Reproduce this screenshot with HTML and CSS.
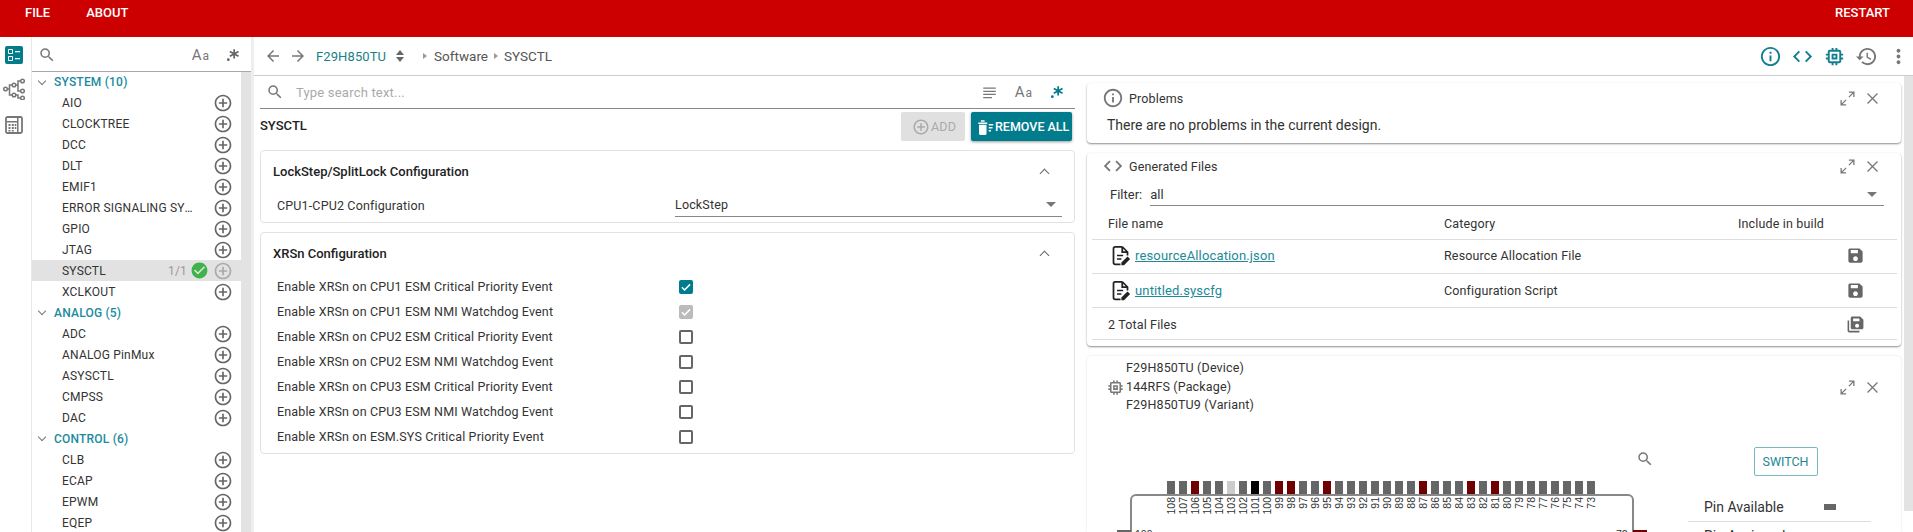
FILE: index.html
```html
<!DOCTYPE html>
<html lang="en">
<head>
  <meta charset="UTF-8">
  <title>SysConfig</title>
  <link rel="stylesheet" href="styles.css">
</head>
<body>
  <svg class="defs" width="0" height="0">
    <symbol id="i-search" viewBox="0 0 24 24"><path d="M15.5 14h-.79l-.28-.27A6.47 6.47 0 0 0 16 9.5 6.5 6.5 0 1 0 9.5 16c1.61 0 3.09-.59 4.23-1.57l.27.28v.79l5 4.99L20.49 19l-4.99-5zm-6 0C7.01 14 5 11.99 5 9.5S7.01 5 9.5 5 14 7.01 14 9.5 11.99 14 9.5 14z"/></symbol>
    <symbol id="i-add" viewBox="0 0 24 24"><path d="M13 7h-2v4H7v2h4v4h2v-4h4v-2h-4V7zm-1-5C6.48 2 2 6.48 2 12s4.48 10 10 10 10-4.48 10-10S17.52 2 12 2zm0 18c-4.41 0-8-3.59-8-8s3.59-8 8-8 8 3.59 8 8-3.59 8-8 8z"/></symbol>
    <symbol id="i-ok" viewBox="0 0 24 24"><path d="M12 2C6.48 2 2 6.48 2 12s4.48 10 10 10 10-4.48 10-10S17.52 2 12 2zm-2 15l-5-5 1.41-1.41L10 14.17l7.59-7.59L19 8l-9 9z"/></symbol>
    <symbol id="i-info" viewBox="0 0 24 24"><path d="M11 7h2v2h-2zm0 4h2v6h-2zm1-9C6.48 2 2 6.48 2 12s4.48 10 10 10 10-4.48 10-10S17.52 2 12 2zm0 18c-4.41 0-8-3.59-8-8s3.59-8 8-8 8 3.59 8 8-3.59 8-8 8z"/></symbol>
    <symbol id="i-code" viewBox="0 0 24 24"><path d="M9.4 16.6L4.8 12l4.6-4.6L8 6l-6 6 6 6 1.4-1.4zm5.2 0l4.6-4.6-4.6-4.6L16 6l6 6-6 6-1.4-1.4z"/></symbol>
    <symbol id="i-chip" viewBox="0 0 24 24"><path d="M15 9H9v6h6V9zm-2 4h-2v-2h2v2zm8-2V9h-2V7c0-1.1-.9-2-2-2h-2V3h-2v2h-2V3H9v2H7c-1.1 0-2 .9-2 2v2H3v2h2v2H3v2h2v2c0 1.1.9 2 2 2h2v2h2v-2h2v2h2v-2h2c1.1 0 2-.9 2-2v-2h2v-2h-2v-2h2zm-4 6H7V7h10v10z"/></symbol>
    <symbol id="i-history" viewBox="0 0 24 24"><path d="M13 3c-4.97 0-9 4.03-9 9H1l3.89 3.89.07.14L9 12H6c0-3.87 3.13-7 7-7s7 3.13 7 7-3.13 7-7 7c-1.93 0-3.68-.79-4.94-2.06l-1.42 1.42C8.27 19.99 10.51 21 13 21c4.97 0 9-4.03 9-9s-4.03-9-9-9zm-1 5v5l4.28 2.54.72-1.21-3.5-2.08V8H12z"/></symbol>
    <symbol id="i-more" viewBox="0 0 24 24"><path d="M12 8c1.1 0 2-.9 2-2s-.9-2-2-2-2 .9-2 2 .9 2 2 2zm0 2c-1.1 0-2 .9-2 2s.9 2 2 2 2-.9 2-2-.9-2-2-2zm0 6c-1.1 0-2 .9-2 2s.9 2 2 2 2-.9 2-2-.9-2-2-2z"/></symbol>
    <symbol id="i-back" viewBox="0 0 24 24"><path d="M20 11H7.83l5.59-5.59L12 4l-8 8 8 8 1.41-1.41L7.83 13H20v-2z"/></symbol>
    <symbol id="i-forward" viewBox="0 0 24 24"><path d="M12 4l-1.41 1.41L16.17 11H4v2h12.17l-5.58 5.59L12 20l8-8z"/></symbol>
    <symbol id="i-close" viewBox="0 0 24 24"><path d="M5 5l14 14M19 5L5 19" fill="none" stroke="currentColor" stroke-width="1.8"/></symbol>
    <symbol id="i-expand" viewBox="0 0 24 24"><path d="M14 3h7v7M21 3l-7 7M3 14v7h7M3 21l7-7" fill="none" stroke="currentColor" stroke-width="1.8"/></symbol>
    <symbol id="i-save" viewBox="0 0 24 24"><path d="M17 3H5c-1.11 0-2 .9-2 2v14c0 1.1.89 2 2 2h14c1.1 0 2-.9 2-2V7l-4-4zm-5 16c-1.66 0-3-1.34-3-3s1.34-3 3-3 3 1.34 3 3-1.34 3-3 3zm3-10H6V5h9v4z"/></symbol>
    <symbol id="i-saveall" viewBox="0 0 24 24"><path d="M2 7h2v13h13v2H4c-1.1 0-2-.9-2-2V7z"/><path d="M18 2H8c-1.1 0-2 .9-2 2v12c0 1.1.9 2 2 2h12c1.1 0 2-.9 2-2V6l-4-4zm-4 14c-1.4 0-2.5-1.1-2.5-2.5S12.600 11 14 11s2.500 1.100 2.500 2.500S15.400 16 14 16zm3-8H9V4.500h8V8z"/></symbol>
    <symbol id="i-file" viewBox="0 0 24 24"><path d="M14 2H6a2 2 0 0 0-2 2v16a2 2 0 0 0 2 2h6M14 2l6 6v4M14 2v6h6" fill="none" stroke="currentColor" stroke-width="2"/><path d="M8 12h7M8 16h5" stroke="currentColor" stroke-width="1.800"/><path d="M13 23v-3l7-7 3 3-7 7z"/></symbol>
    <symbol id="i-regex" viewBox="0 0 24 24"><circle cx="4" cy="20" r="2.400"/><path d="M14 2v16M6.500 6l15 8M21.500 6l-15 8" fill="none" stroke="currentColor" stroke-width="3"/></symbol>
    <symbol id="i-wrap" viewBox="0 0 24 24"><path d="M2 4h20v2H2zM2 9h20v2H2zM2 14h20v2H2zM2 19h14v2H2z"/></symbol>
    <symbol id="i-tick" viewBox="0 0 24 24"><path d="M5 12.500l4.500 4.500L19 7.500" fill="none" stroke="#fff" stroke-width="2.600"/></symbol>
    <symbol id="i-trash" viewBox="0 0 24 24"><path d="M3 6h12v2H3zM6.500 3h5v2h-5zM4 9h10v12a1.500 1.500 0 0 1-1.500 1.500h-7A1.500 1.500 0 0 1 4 21zM17 8h6v2h-6zM17 12h5v2h-5zM17 16h3v2h-3z"/></symbol>
    <symbol id="i-list" viewBox="0 0 18 18"><rect width="18" height="18" rx="2" fill="#007c8c"/><path d="M3.500 3.500h4v4h-4zM3.500 10.500h4v4h-4z" fill="none" stroke="#fff"/><path d="M10 5h5v1.200h-5zM10 12h5v1.200h-5z" fill="#fff"/></symbol>
    <symbol id="i-tree" viewBox="0 0 22 22"><g fill="none" stroke="currentColor" stroke-width="1.500"><circle cx="2.500" cy="11" r="1.800"/><circle cx="11" cy="7" r="1.800"/><circle cx="11" cy="17" r="1.800"/><circle cx="19.500" cy="3" r="1.800"/><circle cx="19.500" cy="13" r="1.800"/><circle cx="19.500" cy="20" r="1.800"/><path d="M4.300 11h2.200V7h2.700M6.500 11v6h2.700M12.800 7h2.200V3h2.700M15 7v6h2.700M12.800 17h2.200v3h2.700"/></g></symbol>
    <symbol id="i-calc" viewBox="0 0 18 18"><rect x="1" y="1" width="16" height="16" rx="1.500" fill="none" stroke="currentColor" stroke-width="1.800"/><path d="M2 5h10v1.500H2zM12 1h1.500v16H12z"/><path d="M3.500 8h2v2h-2zM6.800 8h2v2h-2zM3.500 11h2v2h-2zM6.800 11h2v2h-2zM3.500 14h2v1.500h-2zM6.800 14h2v1.500h-2zM9.800 8h1.500v2H9.800zM9.800 11h1.500v2H9.800z"/></symbol>
  </svg>

  <header class="topbar">
    <nav class="topbar-menu"><span>FILE</span><span>ABOUT</span></nav>
    <span>RESTART</span>
  </header>

  <div class="app">
    <aside class="rail">
      <svg class="rail-list"><use href="#i-list"/></svg>
      <svg class="rail-tree"><use href="#i-tree"/></svg>
      <svg class="rail-calc"><use href="#i-calc"/></svg>
    </aside>

    <aside class="sidebar">
      <div class="side-search">
        <svg class="ico-search"><use href="#i-search"/></svg>
        <span class="aa">A<small>a</small></span>
        <svg class="ico-regex"><use href="#i-regex"/></svg>
      </div>
      <div class="side-body">
        <div class="mods">
          <div class="group group-first"><span class="chev"></span>SYSTEM (10)</div>
          <div class="mod"><span class="mod-name">AIO</span><svg class="plus"><use href="#i-add"/></svg></div>
          <div class="mod"><span class="mod-name">CLOCKTREE</span><svg class="plus"><use href="#i-add"/></svg></div>
          <div class="mod"><span class="mod-name">DCC</span><svg class="plus"><use href="#i-add"/></svg></div>
          <div class="mod"><span class="mod-name">DLT</span><svg class="plus"><use href="#i-add"/></svg></div>
          <div class="mod"><span class="mod-name">EMIF1</span><svg class="plus"><use href="#i-add"/></svg></div>
          <div class="mod"><span class="mod-name trunc">ERROR SIGNALING SYSTEM</span><svg class="plus"><use href="#i-add"/></svg></div>
          <div class="mod"><span class="mod-name">GPIO</span><svg class="plus"><use href="#i-add"/></svg></div>
          <div class="mod"><span class="mod-name">JTAG</span><svg class="plus"><use href="#i-add"/></svg></div>
          <div class="mod selected"><span class="mod-name">SYSCTL</span><span class="count">1/1</span><svg class="ok"><use href="#i-ok"/></svg><svg class="plus"><use href="#i-add"/></svg></div>
          <div class="mod"><span class="mod-name">XCLKOUT</span><svg class="plus"><use href="#i-add"/></svg></div>
          <div class="group"><span class="chev"></span>ANALOG (5)</div>
          <div class="mod"><span class="mod-name">ADC</span><svg class="plus"><use href="#i-add"/></svg></div>
          <div class="mod"><span class="mod-name">ANALOG PinMux</span><svg class="plus"><use href="#i-add"/></svg></div>
          <div class="mod"><span class="mod-name">ASYSCTL</span><svg class="plus"><use href="#i-add"/></svg></div>
          <div class="mod"><span class="mod-name">CMPSS</span><svg class="plus"><use href="#i-add"/></svg></div>
          <div class="mod"><span class="mod-name">DAC</span><svg class="plus"><use href="#i-add"/></svg></div>
          <div class="group"><span class="chev"></span>CONTROL (6)</div>
          <div class="mod"><span class="mod-name">CLB</span><svg class="plus"><use href="#i-add"/></svg></div>
          <div class="mod"><span class="mod-name">ECAP</span><svg class="plus"><use href="#i-add"/></svg></div>
          <div class="mod"><span class="mod-name">EPWM</span><svg class="plus"><use href="#i-add"/></svg></div>
          <div class="mod"><span class="mod-name">EQEP</span><svg class="plus"><use href="#i-add"/></svg></div>
        </div>
        <div class="track"></div>
      </div>
    </aside>

    <main class="main">
      <div class="crumbs">
        <svg class="nav-arrow"><use href="#i-back"/></svg>
        <svg class="nav-arrow"><use href="#i-forward"/></svg>
        <span class="device">F29H850TU</span>
        <span class="sorter"><i></i><i></i></span>
        <span class="tri first"></span><span>Software</span>
        <span class="tri"></span><span>SYSCTL</span>
        <div class="crumb-tools">
          <svg class="tool teal"><use href="#i-info"/></svg>
          <svg class="tool teal"><use href="#i-code"/></svg>
          <svg class="tool teal"><use href="#i-chip"/></svg>
          <svg class="tool"><use href="#i-history"/></svg>
          <svg class="tool more"><use href="#i-more"/></svg>
        </div>
      </div>

      <div class="panes">
        <section class="config">
          <div class="conf-search">
            <svg class="ico-search"><use href="#i-search"/></svg>
            <span class="placeholder">Type search text...</span>
            <svg class="ico-wrap"><use href="#i-wrap"/></svg>
            <span class="aa">A<small>a</small></span>
            <svg class="ico-regex on"><use href="#i-regex"/></svg>
          </div>
          <div class="conf-title">
            <strong>SYSCTL</strong>
            <div class="conf-btns">
              <button class="btn-add"><svg><use href="#i-add"/></svg>ADD</button>
              <button class="btn-remove"><svg><use href="#i-trash"/></svg>REMOVE ALL</button>
            </div>
          </div>

          <div class="group-card">
            <div class="group-head"><span>LockStep/SplitLock Configuration</span><span class="chev-up"></span></div>
            <div class="row row-select">
              <span class="row-label">CPU1-CPU2 Configuration</span>
              <div class="select select-wide"><span>LockStep</span><i class="caret"></i></div>
            </div>
          </div>

          <div class="group-card">
            <div class="group-head"><span>XRSn Configuration</span><span class="chev-up"></span></div>
            <div class="row"><span class="row-label">Enable XRSn on CPU1 ESM Critical Priority Event</span><span class="check on"><svg><use href="#i-tick"/></svg></span></div>
            <div class="row"><span class="row-label">Enable XRSn on CPU1 ESM NMI Watchdog Event</span><span class="check off"><svg><use href="#i-tick"/></svg></span></div>
            <div class="row"><span class="row-label">Enable XRSn on CPU2 ESM Critical Priority Event</span><span class="check"></span></div>
            <div class="row"><span class="row-label">Enable XRSn on CPU2 ESM NMI Watchdog Event</span><span class="check"></span></div>
            <div class="row"><span class="row-label">Enable XRSn on CPU3 ESM Critical Priority Event</span><span class="check"></span></div>
            <div class="row"><span class="row-label">Enable XRSn on CPU3 ESM NMI Watchdog Event</span><span class="check"></span></div>
            <div class="row"><span class="row-label">Enable XRSn on ESM.SYS Critical Priority Event</span><span class="check"></span></div>
          </div>
        </section>

        <section class="side-panels">
          <div class="cards">
            <div class="card card-problems">
              <div class="card-head">
                <svg class="head-ico"><use href="#i-info"/></svg><span class="card-title">Problems</span>
                <svg class="win"><use href="#i-expand"/></svg><svg class="win"><use href="#i-close"/></svg>
              </div>
              <p class="problems-msg">There are no problems in the current design.</p>
            </div>

            <div class="card card-files">
              <div class="card-head">
                <svg class="head-ico"><use href="#i-code"/></svg><span class="card-title">Generated Files</span>
                <svg class="win"><use href="#i-expand"/></svg><svg class="win"><use href="#i-close"/></svg>
              </div>
              <div class="filter">
                <span>Filter:</span>
                <div class="select"><span>all</span><i class="caret"></i></div>
              </div>
              <div class="ftable">
                <div class="frow fhead"><span>File name</span><span>Category</span><span>Include in build</span></div>
                <div class="frow frow-first">
                  <span class="fname"><svg><use href="#i-file"/></svg><a>resourceAllocation.json</a></span>
                  <span>Resource Allocation File</span>
                  <svg class="fsave"><use href="#i-save"/></svg>
                </div>
                <div class="frow">
                  <span class="fname"><svg><use href="#i-file"/></svg><a>untitled.syscfg</a></span>
                  <span>Configuration Script</span>
                  <svg class="fsave"><use href="#i-save"/></svg>
                </div>
                <div class="frow ftotal">
                  <span>2 Total Files</span><span></span>
                  <svg class="fsave"><use href="#i-saveall"/></svg>
                </div>
              </div>
            </div>

            <div class="card card-device">
              <div class="device-head">
                <svg class="device-ico"><use href="#i-chip"/></svg>
                <div class="device-lines">
                  <div>F29H850TU (Device)</div>
                  <div>144RFS (Package)</div>
                  <div>F29H850TU9 (Variant)</div>
                </div>
                <svg class="win"><use href="#i-expand"/></svg><svg class="win"><use href="#i-close"/></svg>
              </div>
              <div class="device-body">
                <div class="diagram">
                  <svg class="zoom-ico"><use href="#i-search"/></svg>
                  <div class="pins">
                    <div class="pin"><b></b><span>108</span></div>
                    <div class="pin"><b></b><span>107</span></div>
                    <div class="pin used"><b></b><span>106</span></div>
                    <div class="pin"><b></b><span>105</span></div>
                    <div class="pin"><b></b><span>104</span></div>
                    <div class="pin na"><b></b><span>103</span></div>
                    <div class="pin"><b></b><span>102</span></div>
                    <div class="pin blk"><b></b><span>101</span></div>
                    <div class="pin"><b></b><span>100</span></div>
                    <div class="pin used"><b></b><span>99</span></div>
                    <div class="pin used"><b></b><span>98</span></div>
                    <div class="pin"><b></b><span>97</span></div>
                    <div class="pin"><b></b><span>96</span></div>
                    <div class="pin used"><b></b><span>95</span></div>
                    <div class="pin"><b></b><span>94</span></div>
                    <div class="pin"><b></b><span>93</span></div>
                    <div class="pin"><b></b><span>92</span></div>
                    <div class="pin"><b></b><span>91</span></div>
                    <div class="pin"><b></b><span>90</span></div>
                    <div class="pin"><b></b><span>89</span></div>
                    <div class="pin"><b></b><span>88</span></div>
                    <div class="pin used"><b></b><span>87</span></div>
                    <div class="pin"><b></b><span>86</span></div>
                    <div class="pin"><b></b><span>85</span></div>
                    <div class="pin"><b></b><span>84</span></div>
                    <div class="pin used"><b></b><span>83</span></div>
                    <div class="pin"><b></b><span>82</span></div>
                    <div class="pin used"><b></b><span>81</span></div>
                    <div class="pin"><b></b><span>80</span></div>
                    <div class="pin"><b></b><span>79</span></div>
                    <div class="pin"><b></b><span>78</span></div>
                    <div class="pin"><b></b><span>77</span></div>
                    <div class="pin"><b></b><span>76</span></div>
                    <div class="pin"><b></b><span>75</span></div>
                    <div class="pin"><b></b><span>74</span></div>
                    <div class="pin"><b></b><span>73</span></div>
                  </div>
                  <div class="chip"></div>
                  <div class="side-pin left"></div>
                  <span class="side-num left">109</span>
                  <div class="side-pin right"></div>
                  <span class="side-num right">72</span>
                </div>
                <div class="legend">
                  <button class="btn-switch">SWITCH</button>
                  <div class="legend-row"><span>Pin Available</span><i class="swatch"></i></div>
                  <div class="legend-row"><span>Pin Assigned</span><i class="swatch red"></i></div>
                </div>
              </div>
            </div>
          </div>
          <div class="track track-right"></div>
        </section>
      </div>
    </main>
  </div>
</body>
</html>
```

FILE: styles.css
```css
* { box-sizing: border-box; }
html, body { margin: 0; height: 100%; }
body { font-family: Roboto, "Liberation Sans", sans-serif; font-size: 13px; color: #333; background: #fff; overflow: hidden; display: flex; flex-direction: column; height: 100vh; }
.defs { position: absolute; }
svg { fill: currentColor; display: block; flex: none; }

.topbar { height: 37px; flex: none; background: #cc0000; color: #fff; font-size: 13px; font-weight: 500; display: flex; justify-content: space-between; padding: 5px 23px 0 25px; }
.topbar-menu { display: flex; gap: 36px; }

.app { flex: 1; display: flex; min-height: 0; }

.rail { width: 32px; flex: none; border-right: 1px solid #e8e8e8; display: flex; flex-direction: column; color: #777; padding: 9px 0 0 5px; }
.rail-list { width: 18px; height: 18px; }
.rail-tree { width: 22px; height: 22px; margin: 14px 0 0 -2px; }
.rail-calc { width: 18px; height: 18px; margin: 16px 0 0; }

.sidebar { width: 219px; flex: none; display: flex; flex-direction: column; border-right: 3px solid #eee; box-sizing: content-box; }
.side-search { height: 35px; flex: none; display: flex; align-items: center; border-bottom: 1px solid #aaa; color: #777; padding: 2px 11px 0 6px; }
.ico-search { width: 18px; height: 18px; color: #777; }
.aa { font-size: 15px; color: #777; letter-spacing: 1px; line-height: 1; }
.aa small { font-size: 12px; }
.side-search .aa { margin-left: auto; margin-right: 16px; }
.ico-regex { width: 14px; height: 14px; color: #666; }
.ico-regex.on { color: #007c8c; }

.side-body { flex: 1; display: flex; min-height: 0; }
.mods { width: 209px; flex: none; }
.track { width: 10px; background: #e3e3e3; }

.group { height: 21px; display: flex; align-items: center; color: #1b8ba0; font-size: 12px; font-weight: 500; padding-left: 5px; letter-spacing: .2px; }
.group-first { height: 20px; }
.chev { width: 6px; height: 6px; border-right: 1.5px solid #777; border-bottom: 1.5px solid #777; transform: rotate(45deg); margin: -3px 9px 0 2px; }
.mod { height: 21px; display: flex; align-items: center; padding: 0 8px 0 30px; color: #333; font-size: 12px; letter-spacing: .2px; }
.mod-name { flex: none; }
.trunc { width: 134px; overflow: hidden; white-space: nowrap; text-overflow: ellipsis; }
.plus { width: 20px; height: 20px; color: #666; margin-left: auto; }
.mod.selected { background: #e2e2e2; }
.mod.selected .plus { color: #aaa; margin-left: 4px; }
.count { margin-left: auto; color: #999; font-size: 12px; }
.ok { width: 19px; height: 19px; color: #3cb44a; margin-left: 3px; }

.main { flex: 1; min-width: 0; display: flex; flex-direction: column; }
.crumbs { height: 39px; flex: none; border-bottom: 1px solid #ccc; display: flex; align-items: center; color: #555; padding-left: 10px; font-size: 13.500px; }
.nav-arrow { width: 18px; height: 18px; color: #777; margin-right: 7px; }
.device { color: #1b8085; font-size: 13px; margin-left: 2px; letter-spacing: .1px; }
.sorter { display: flex; flex-direction: column; gap: 2px; margin: 0 19px 0 10px; }
.sorter i { width: 0; height: 0; border-left: 4.500px solid transparent; border-right: 4.500px solid transparent; }
.sorter i:first-child { border-bottom: 5px solid #666; }
.sorter i:last-child { border-top: 5px solid #666; }
.tri { width: 0; height: 0; border-left: 4px solid #999; border-top: 3.500px solid transparent; border-bottom: 3.500px solid transparent; margin: 0 6px 0 6px; }
.tri.first { margin: 0 7px 0 0; }
.crumb-tools { margin-left: auto; display: flex; align-items: center; color: #777; gap: 9px; padding-right: 3px; }
.tool { width: 23px; height: 23px; }
.tool.teal { color: #137f8e; }

.panes { flex: 1; display: flex; min-height: 0; }
.config { width: 831px; flex: none; padding: 0 10px 0 6px; }
.conf-search { height: 33px; border-bottom: 1px solid #888; display: flex; align-items: center; padding: 0 11px 0 6px; color: #777; }
.placeholder { color: #aaa; margin-left: 12px; font-size: 13px; letter-spacing: .2px; }
.ico-wrap { width: 15px; height: 15px; margin-left: auto; color: #777; margin-right: 18px; }
.conf-search .aa { margin-right: 17px; }
.conf-title { height: 41px; display: flex; justify-content: space-between; align-items: flex-start; padding: 3px 3px 0 0; }
.conf-title strong { font-weight: 500; font-size: 13px; color: #222; margin-top: 6px; }
.conf-btns { display: flex; gap: 6px; }
.conf-btns button { height: 29px; border: 0; border-radius: 2px; display: flex; align-items: center; font-family: inherit; font-size: 12.500px; padding: 0; letter-spacing: .2px; white-space: nowrap; }
.btn-add { width: 64px; background: #e0e0e0; color: #aaa; padding-left: 11px !important; gap: 1px; }
.btn-add svg { width: 18px; height: 18px; }
.conf-btns .btn-remove { width: 101px; background: #007c8c; color: #fff; font-weight: 500; padding-left: 5px; box-shadow: 0 1px 3px rgba(0,0,0,.4); letter-spacing: 0; }
.btn-remove svg { width: 18px; height: 18px; margin-right: 1px; }

.group-card { border: 1px solid #e2e2e2; border-radius: 4px; margin-bottom: 9px; padding-bottom: 3px; }
.group-card + .group-card { padding-bottom: 4px; }
.group-head { height: 41px; display: flex; justify-content: space-between; align-items: center; padding: 0 26px 0 12px; font-weight: 500; color: #222; font-size: 13px; }
.chev-up { width: 7px; height: 7px; border-left: 1.500px solid #666; border-top: 1.500px solid #666; transform: rotate(45deg); margin-top: 3px; }
.row { height: 25px; display: flex; align-items: center; padding-left: 16px; color: #333; font-size: 12.500px; letter-spacing: .15px; }
.row-label { width: 402px; flex: none; }
.row-select { height: 26px; margin-bottom: 1px; }
.row-select .row-label { width: 398px; }
.select { flex: 1; height: 24px; border-bottom: 1px solid #888; display: flex; align-items: center; justify-content: space-between; padding-right: 6px; color: #333; }
.select-wide { flex: none; width: 387px; }
.caret { width: 0; height: 0; border-left: 5px solid transparent; border-right: 5px solid transparent; border-top: 5px solid #777; }
.check { width: 14px; height: 14px; border: 2px solid #666; border-radius: 2px; }
.check svg { width: 14px; height: 14px; margin: -2px; }
.check.on { background: #007c8c; border-color: #007c8c; }
.check.off { background: #bbb; border-color: #bbb; }

.side-panels { flex: 1; min-width: 0; display: flex; padding-left: 2px; }
.cards { width: 814px; flex: none; padding-top: 7px; display: flex; flex-direction: column; gap: 10px; }
.track-right { width: 9px; height: 435px; margin-left: 3px; }
.card { background: #fff; border-radius: 4px; box-shadow: 0 1px 2px rgba(0,0,0,.45); flex: none; }
.card-problems { height: 60px; }
.card-files { height: 193px; }
.card-device { flex: 1; box-shadow: 0 0 2px rgba(0,0,0,.15); border-radius: 4px 4px 0 0; overflow: hidden; min-height: 0; }
.card-head { height: 28px; display: flex; align-items: center; padding: 0 20px 0 17px; color: #444; }
.card-problems .card-head { height: 30px; }
.card-files .card-head { padding-bottom: 2px; }
.head-ico { width: 22px; height: 22px; color: #777; margin-right: 5px; margin-left: -2px; }
.card-title { flex: 1; color: #333; font-size: 12.500px; letter-spacing: .15px; }
.win { width: 17px; height: 17px; color: #777; margin-left: 8px; }
.problems-msg { margin: 4px 0 0 20px; font-size: 14px; color: #333; line-height: 16px; }

.filter { height: 24px; margin-top: 1px; margin-bottom: -1px; display: flex; align-items: center; padding: 0 17px 0 23px; gap: 8px; color: #333; }
.filter .select { height: 23px; margin-bottom: -1px; padding-right: 7px; }
.ftable { padding: 0 4px 0 5px; font-size: 12.500px; letter-spacing: .15px; }
.frow { display: grid; grid-template-columns: 336px 294px 1fr; align-items: center; height: 34px; border-bottom: 1px solid #ddd; padding-left: 16px; color: #333; }
.fhead { height: 35px; padding-top: 2px; }
.frow-first { padding-bottom: 2px; }
.ftotal { height: 32px; padding-top: 2px; }
.fname { display: flex; align-items: center; gap: 4px; margin-left: 3px; }
.fname svg { width: 21px; height: 21px; color: #222; margin-left: -1px; }
.fname a { color: #1d8a96; text-decoration: underline; font-size: 13px; letter-spacing: .15px; }
.fsave { width: 19px; height: 19px; color: #666; margin-left: 108px; }

.device-head { display: flex; align-items: center; padding: 3px 20px 0 19px; height: 59px; color: #333; }
.device-ico { width: 19px; height: 19px; color: #777; }
.device-lines { flex: 1; margin-left: 1px; line-height: 18.500px; font-size: 12.500px; letter-spacing: .15px; }

.device-body { display: flex; }
.diagram { position: relative; width: 601px; height: 300px; }
.zoom-ico { position: absolute; left: 549px; top: 35px; width: 18px; height: 18px; color: #777; }
.pins { position: absolute; left: 80px; top: 66px; display: flex; gap: 4px; z-index: 1; }
.pin { width: 8px; display: flex; flex-direction: column; align-items: center; }
.pin b { width: 8px; height: 13px; background: #666; }
.pin span { writing-mode: vertical-rl; transform: rotate(180deg); font-size: 10.500px; line-height: 10px; margin-top: 3px; color: #333; font-family: "Liberation Sans", sans-serif; }
.pin.used b { background: #6e0000; }
.pin.na b { background: #ccc; }
.pin.blk b { background: #000; }
.chip { position: absolute; left: 43px; top: 79px; width: 504px; height: 200px; border: 2px solid #888; border-radius: 6px; }
.side-pin { position: absolute; top: 115px; width: 14px; height: 6px; background: #666; }
.side-pin.left { left: 30px; }
.side-pin.right { left: 546px; background: #6e0000; }
.side-num { position: absolute; top: 113px; font-size: 10.500px; color: #333; font-family: "Liberation Sans", sans-serif; }
.side-num.left { left: 48px; }
.side-num.right { left: 529px; }

.legend { width: 183px; flex: none; display: flex; flex-direction: column; align-items: center; padding-top: 32px; }
.btn-switch { width: 64px; height: 29px; background: #fff; border: 1px solid #76b9c2; border-radius: 2px; color: #1b8895; font-family: Roboto, sans-serif; font-size: 12.500px; padding: 0; margin: 0 0 17px 12px; }
.legend-row { width: 183px; height: 29px; flex: none; display: flex; align-items: center; justify-content: space-between; border-bottom: 1px solid #ddd; padding: 0 35px 0 16px; font-size: 14px; color: #333; }
.swatch { width: 12px; height: 6px; background: #666; }
.swatch.red { background: #6e0000; }
```
